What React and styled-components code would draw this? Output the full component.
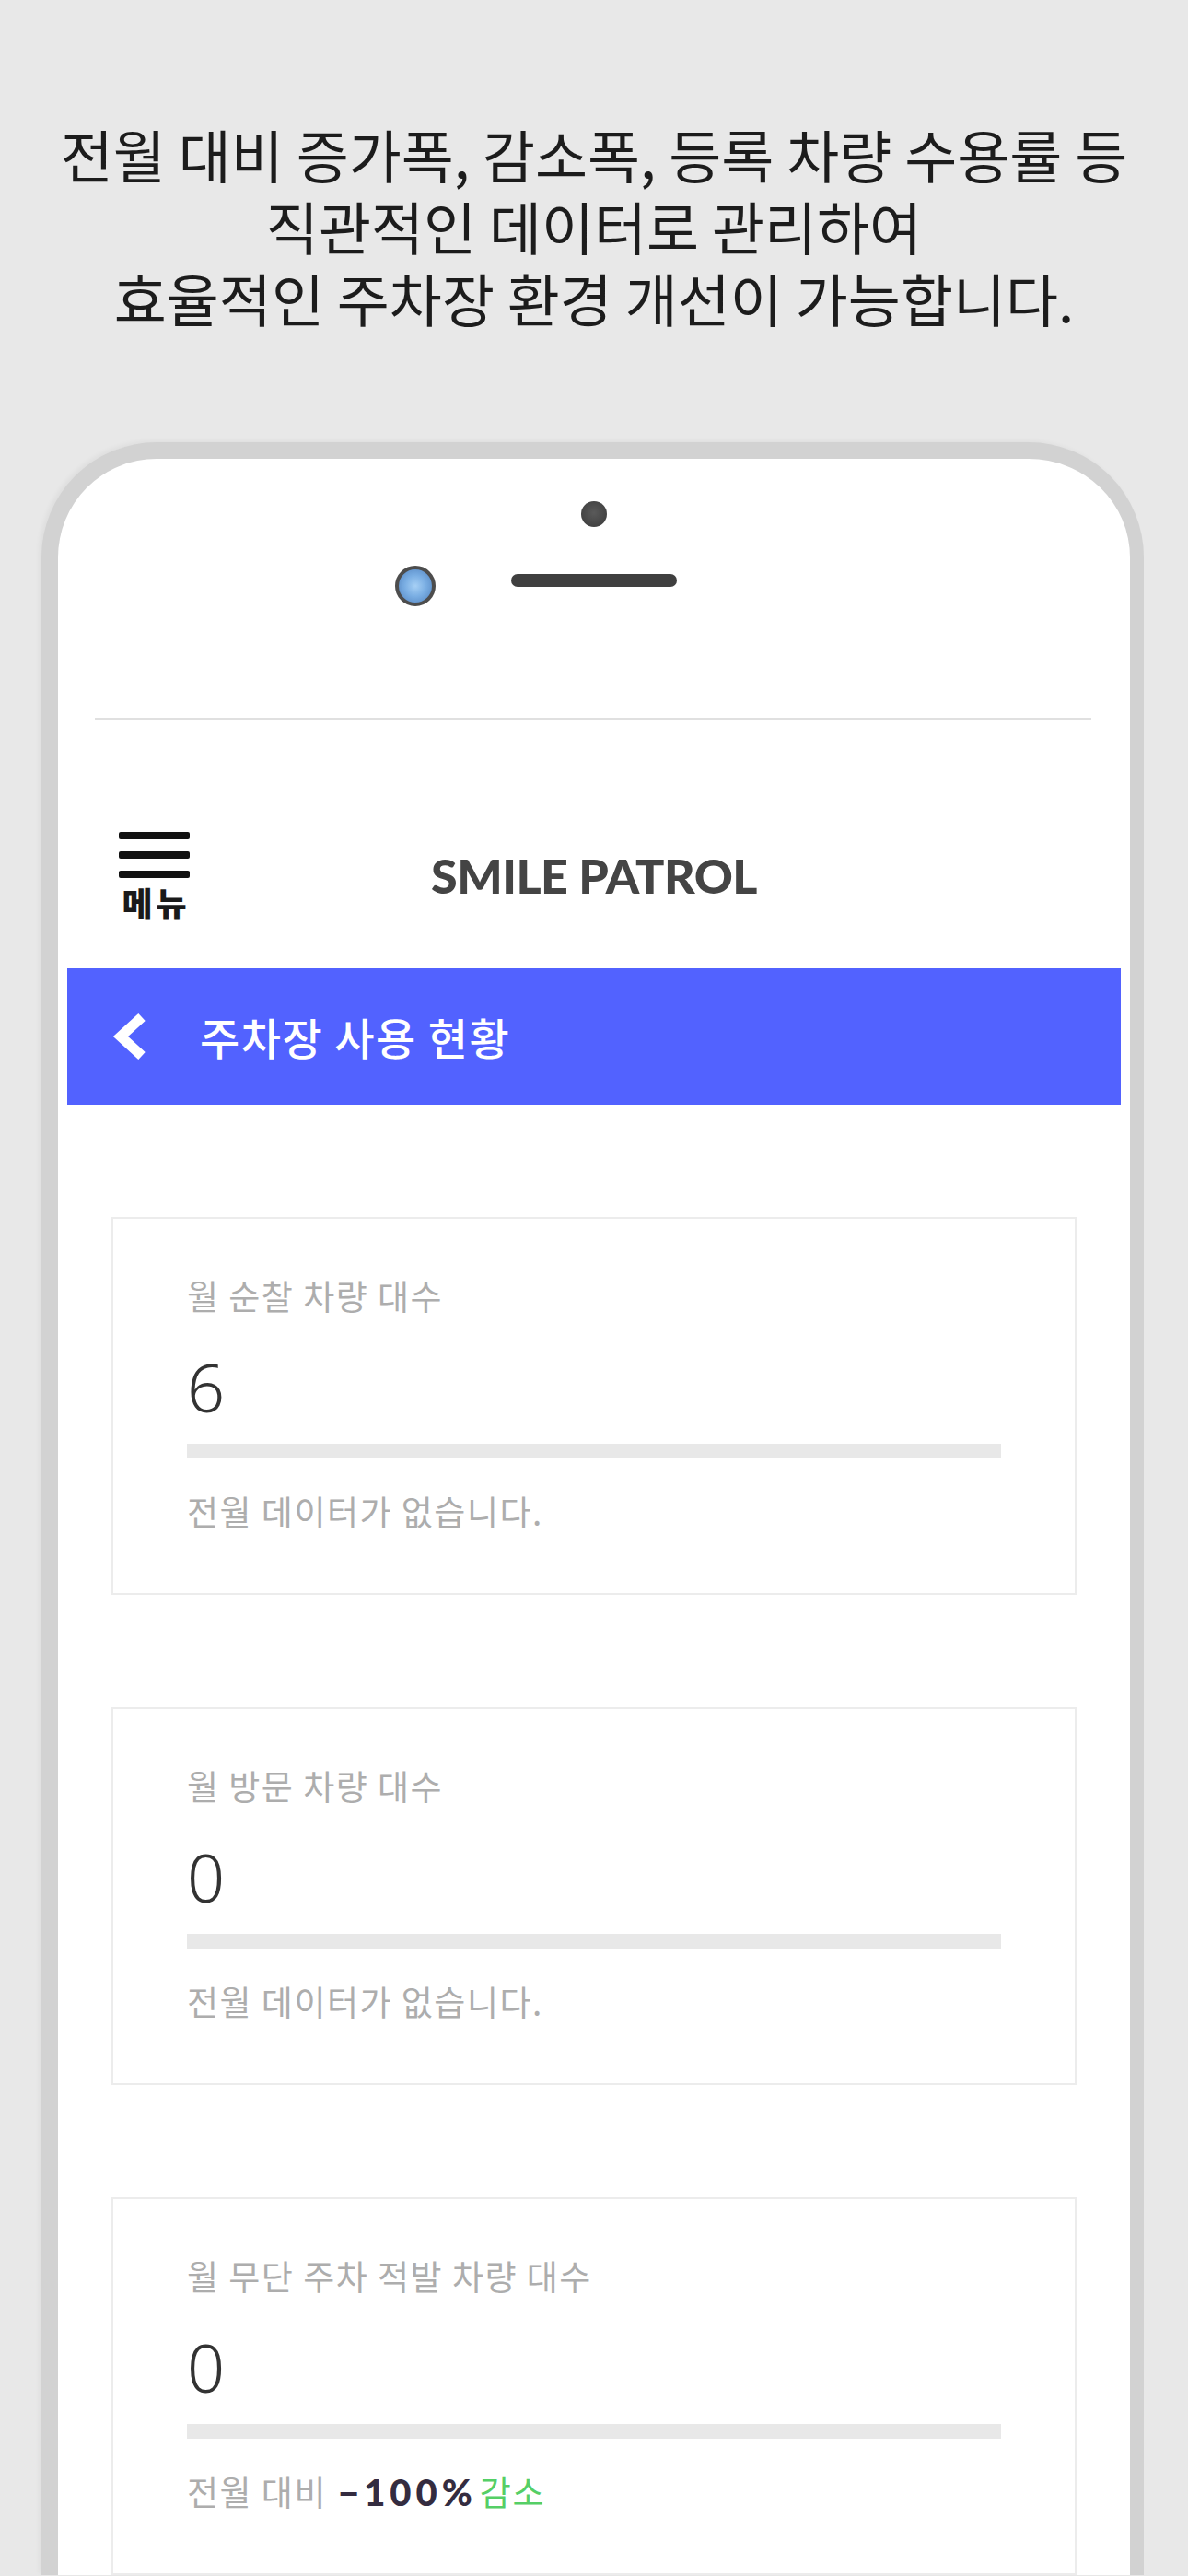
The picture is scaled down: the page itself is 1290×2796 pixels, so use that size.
import React from 'react';
import styled, { createGlobalStyle } from 'styled-components';

const GlobalStyle = createGlobalStyle`
  html, body {
    margin: 0;
    padding: 0;
    background: #e8e8e8;
  }
  body {
    font-family: "Noto Sans CJK KR", "Noto Sans", sans-serif;
  }
`;

const Page = styled.div`
  width: 1290px;
  height: 2796px;
  overflow: hidden;
  background: #e8e8e8;
  padding-top: 128px;
  box-sizing: border-box;
`;

const Headline = styled.h1`
  margin: 0;
  font-family: "Noto Sans CJK KR", sans-serif;
  font-weight: 400;
  font-size: 62px;
  color: #1c1c1c;
  text-align: center;
`;

const HeadLine = styled.span`
  display: block;
  height: 78px;
  line-height: 78px;
`;

const Phone = styled.div`
  margin: 118px 0 0 45px;
  width: 1197px;
  box-sizing: border-box;
  background: #fff;
  border: solid #d2d2d2;
  border-width: 18px 15px 0 18px;
  border-radius: 125px 125px 0 0;
  box-shadow: -3px -2px 5px rgba(0, 0, 0, 0.04);
  display: flex;
  flex-direction: column;
`;

const Sensors = styled.div`
  display: flex;
  flex-direction: column;
  align-items: center;
  padding-top: 46px;
`;

const ProximityDot = styled.div`
  width: 28px;
  height: 28px;
  border-radius: 50%;
  background: radial-gradient(circle at 50% 45%, #5a5a5a 0%, #434343 70%, #3a3a3a 100%);
`;

const LensRow = styled.div`
  width: 100%;
  margin-top: 42px;
  display: grid;
  grid-template-columns: 1fr 180px 1fr;
  align-items: start;
`;

const Lens = styled.div`
  justify-self: end;
  margin-right: 82px;
  width: 36px;
  height: 36px;
  border-radius: 50%;
  border: 4px solid #4d4d4d;
  background: radial-gradient(circle at 50% 50%, #a7d0f5 0%, #7aaee3 45%, #4f80bd 100%);
`;

const Speaker = styled.div`
  margin-top: 9px;
  height: 14px;
  border-radius: 7px;
  background: #3f3f3f;
`;

const Divider = styled.hr`
  margin: 121px 42px 0 40px;
  border: none;
  height: 2px;
  background: #e0e0e0;
`;

const Screen = styled.div`
  padding: 0 10px;
`;

const TopBar = styled.header`
  display: grid;
  grid-template-columns: 1fr auto 1fr;
  align-items: center;
  padding: 122px 0 55px;
`;

const MenuButton = styled.div`
  justify-self: start;
  margin-left: 56px;
  width: 77px;
  display: flex;
  flex-direction: column;
  align-items: center;
`;

const MenuLine = styled.span`
  display: block;
  width: 77px;
  height: 8px;
  background: #111;
  border-radius: 2px;
  & + & {
    margin-top: 13px;
  }
`;

const MenuLabel = styled.span`
  margin-top: 9px;
  font-family: "Noto Sans CJK KR", sans-serif;
  font-weight: 900;
  font-size: 36px;
  line-height: 34px;
  letter-spacing: 4px;
  margin-right: -4px;
  color: #1a1a1a;
`;

const Brand = styled.div`
  font-family: Lato, "Liberation Sans", sans-serif;
  font-weight: 900;
  font-size: 52px;
  line-height: 52px;
  color: #444;
  letter-spacing: -0.5px;
`;

const SubBar = styled.div`
  height: 148px;
  background: #5262ff;
  display: flex;
  align-items: center;
  padding-left: 47px;
`;

const BackIcon = styled.svg`
  width: 42px;
  height: 52px;
  flex-shrink: 0;
`;

const SubTitle = styled.h2`
  margin: 0 0 0 55px;
  font-family: "Noto Sans CJK KR", sans-serif;
  font-weight: 500;
  font-size: 47px;
  line-height: 52px;
  letter-spacing: 1.5px;
  color: #fff;
`;

const Content = styled.main`
  padding: 122px 48px 0;
  display: flex;
  flex-direction: column;
  gap: 122px;
`;

const Card = styled.section`
  height: 410px;
  box-sizing: border-box;
  border: 2px solid #ececec;
  padding: 65px 80px 0;
  display: flex;
  flex-direction: column;
`;

const CardLabel = styled.div`
  font-family: "Noto Sans CJK KR", sans-serif;
  font-size: 37px;
  line-height: 37px;
  color: #adadad;
  letter-spacing: 1.5px;
`;

const CardValue = styled.div`
  margin-top: 44px;
  font-family: "Noto Sans", sans-serif;
  font-weight: 300;
  font-size: 72px;
  line-height: 72px;
  color: #333;
`;

const Track = styled.div`
  margin-top: 26px;
  height: 16px;
  background: #e8e8e8;
`;

const Fill = styled.div`
  height: 100%;
  background: #5262ff;
`;

const CardNote = styled.div`
  margin-top: 39px;
  font-family: "Noto Sans CJK KR", sans-serif;
  font-size: 37px;
  line-height: 37px;
  color: #adadad;
  letter-spacing: 1.5px;
  display: flex;
  align-items: baseline;
`;

const Delta = styled.span`
  margin: 0 3px 0 12px;
  font-family: Lato, "Liberation Sans", sans-serif;
  font-weight: 900;
  font-size: 40px;
  letter-spacing: 5px;
  color: #342c40;
`;

const Trend = styled.span`
  color: ${(props) => props.color};
`;

const stats = [
  { label: '월 순찰 차량 대수', value: 6, ratio: 0 },
  { label: '월 방문 차량 대수', value: 0, ratio: 0 },
  { label: '월 무단 주차 적발 차량 대수', value: 0, ratio: 0, delta: '−100%', trend: '감소' },
];

const headline = [
  '전월 대비 증가폭, 감소폭, 등록 차량 수용률 등',
  '직관적인 데이터로 관리하여',
  '효율적인 주차장 환경 개선이 가능합니다.',
];

function StatCard({ stat }) {
  return (
    <Card>
      <CardLabel>{stat.label}</CardLabel>
      <CardValue>{stat.value}</CardValue>
      <Track>
        <Fill style={{ width: `${stat.ratio * 100}%` }} />
      </Track>
      {stat.delta ? (
        <CardNote>
          전월 대비<Delta>{stat.delta}</Delta>
          <Trend color="#55cf66">{stat.trend}</Trend>
        </CardNote>
      ) : (
        <CardNote>전월 데이터가 없습니다.</CardNote>
      )}
    </Card>
  );
}

function App() {
  return (
    <Page>
      <GlobalStyle />
      <Headline>
        {headline.map((line) => (
          <HeadLine key={line}>{line}</HeadLine>
        ))}
      </Headline>
      <Phone>
        <Sensors>
          <ProximityDot />
          <LensRow>
            <Lens />
            <Speaker />
          </LensRow>
        </Sensors>
        <Divider />
        <Screen>
          <TopBar>
            <MenuButton>
              <MenuLine />
              <MenuLine />
              <MenuLine />
              <MenuLabel>메뉴</MenuLabel>
            </MenuButton>
            <Brand>SMILE PATROL</Brand>
            <div />
          </TopBar>
          <SubBar>
            <BackIcon viewBox="0 0 42 52">
              <polyline
                points="34,5 11,26 34,47"
                fill="none"
                stroke="#fff"
                strokeWidth="11"
                strokeLinejoin="miter"
              />
            </BackIcon>
            <SubTitle>주차장 사용 현황</SubTitle>
          </SubBar>
          <Content>
            {stats.map((s) => (
              <StatCard key={s.label} stat={s} />
            ))}
          </Content>
        </Screen>
      </Phone>
    </Page>
  );
}

export default App;
